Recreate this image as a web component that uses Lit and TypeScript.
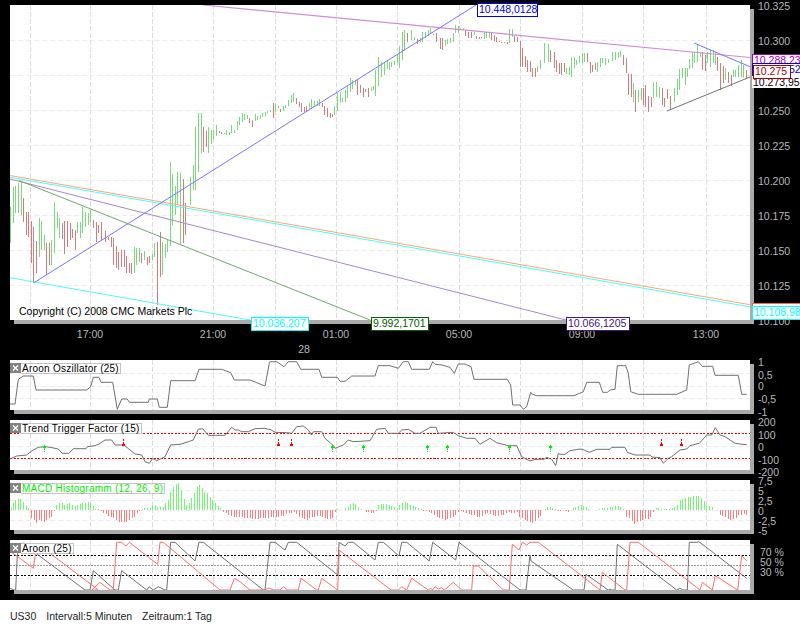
import { LitElement, html, svg, css } from 'lit'
import { customElement } from 'lit/decorators.js'

// all traced from the reference, coordinates are zoom crop pixels (3x) unless scale says otherwise
const line = (x0: number, y0: number, pts: number[][], scale = 3) =>
  pts.map(([x, y]) => `${(x0 + x / scale).toFixed(1)},${(y0 + y / scale).toFixed(1)}`).join(' ')

const barSegs: [number, number, number, string][] = [
  [0, 170, 3, 'g30:110-220 g41:50-160 g47:48-130 g54:40-130 g64:33-135 r70:85-155 r78:127-195 r85:127-200 r94:153-280 r101:172-338 r110:212-308 g118:145-262 g125:152-240 g132:195-240 r140:220-315 r148:220-285 g155:210-285 g163:97-250 g172:125-175 g179:145-205 r187:160-207 r194:152-252 r203:152-230 r211:160-210 r218:178-205 r226:180-240 g233:155-190 g241:155-205 g248:110-190 g256:125-170 g264:130-165 g272:120-155 r280:150-175 r288:155-215 r296:165-190 r303:155-210 r315:183-215 r325:200-210 r335:200-232 r341:205-285 r350:228-295 r356:245-300 r365:240-290 r373:240-290 r380:258-310 r388:280-310 r395:280-312 g403:232-310 g410:235-285 g417:235-275 r424:250-280 g433:243-270 r441:260-285 r449:258-280 g457:252-270 g464:220-260 r472:215-405 r480:187-320 g487:215-315 g495:222-265 g503:210-245'],
  [0, 0, 1, 'g170:162-246 g172.5:174-225 g175:186-215 g177.5:172-205 g180.5:173-245 r183:179-243 r185.5:203-235 g190:177-205 g193:165-190 g195.5:127-190 g198.5:113-172 g201:113-153 r203.5:127-152 r206:131-147 g208.5:127-153 g211:130-144 g213.5:130-139 g216.5:125-136 r219:131-133 r221:132-134 r224:133-134 g226.5:130-135 g229:132-135 g231.5:125-133 g234:130-133 g237:121-130 g239.5:117-125 g242.5:113-122 g244.5:114-120 g247:115-119 r249.5:118-123 r252.5:120-127 g255.5:114-121 g257.5:116-120 g260:115-119 g262.5:113-117 g265:112-116 g267.5:111-113'],
  [270, 0, 3, 'g0:330-337 r10:310-353 g17:313-335 g25:318-325 r32:327-335 g40:317-332 g47:315-325 g55:300-318 g63:285-310 g70:280-307 r79:293-312 r87:305-320 r95:310-335 r102:320-335 r110:318-335 g118:310-328 g125:297-327 g134:303-320 g141:302-318 g148:297-317 r156:310-320 r164:317-345 r172:323-352 r180:340-353 r188:342-352 g194:317-345 g202:280-333 g210:275-310 g218:295-307 g226:270-305 g233:258-295 g241:235-275 g248:240-268 g256:240-255 r263:237-285 r271:255-280 r280:263-290 r287:267-275 r296:265-290 g303:260-272 g311:257-270 g317:210-287 g326:172-258 g335:185-230 g343:190-225 g351:180-207 g357:185-210 g365:185-200 g373:182-195 g381:165-190 g389:138-205 g396:95-180 g404:90-150 r412:100-125 g424:90-120 g432:110-120 r442:117-132 g450:115-125 g457:95-125 g466:95-115 g474:90-108 g480:85-103 r490:102-105 r498:100-125 r510:113-148 r517:115-150 g526:120-137 g533:118-133 g541:115-128 g550:100-125 g557:75-98 g565:78-100 g572:83-90 g580:85-90 r587:92-108 r596:95-115 r604:97-115 g612:97-105 r620:107-118 r628:110-117 r635:110-115 g643:97-118 g650:97-115 g659:95-115 r665:97-120 r673:105-122 r680:110-127 r688:122-127 r695:125-130 r703:127-130 r712:127-132 g718:87-130 g726:87-110 r733:107-125 r741:110-125 r750:123-200 r757:145-200 r765:168-200 r772:180-215 r780:182-215 r788:205-230 r796:205-232 g803:198-215'],
  [530, 0, 3, 'g32:180-208 g42:130-190 g55:132-185 r62:150-185 r72:155-205 r78:180-215 r87:190-222 r94:190-225 r102:190-215 g110:205-222 g118:200-225 g125:170-232 g132:170-205 g140:180-195 g148:167-188 g156:160-188 g164:160-187 r172:160-185 r180:185-218 r187:195-215 r195:190-210 g203:185-215 g210:175-200 g218:175-190 g225:175-195 g235:178-190 g247:155-183 g256:155-180 g264:155-175 g271:153-172 r280:165-195 r288:175-220 r296:222-285 r303:222-290 g310:250-305 r317:270-337 g326:270-305 g333:265-300 r341:265-315 r347:255-320 r355:287-335 r363:290-320 g370:245-295 g379:245-290 g387:262-295 r396:265-315 r404:295-320 r412:268-297 r420:287-328 g433:265-305 g441:237-285 g449:208-270 g456:205-235 g465:205-255 g471:205-232 g479:177-207 g486:155-205 g494:155-190 g503:135-185 g510:155-170 r518:155-210 r526:165-212 g533:155-190 g540:150-200 g549:150-190 g556:155-195 r562:172-212 r572:190-270 r580:197-250 g587:205-240 r596:215-250 r603:225-258 g610:210-232 g617:210-232 g625:195-232 g635:180-230 g640:195-235 r650:210-235'],
]

const px = (x: number) => Math.floor(x) + 0.5

function barPaths() {
  const d: Record<string, string> = { g: '', r: '' }
  for (const [x0, y0, s, data] of barSegs) {
    for (const b of data.split(' ')) {
      const m = b.match(/([gr])([\d.]+):(\d+)-(\d+)/)!
      d[m[1]] += `M${px(x0 + +m[2] / s)} ${(y0 + +m[3] / s).toFixed(1)}V${(y0 + +m[4] / s).toFixed(1)}`
    }
  }
  return d
}

const macdSegs: [number, string][] = [
  [0, '33:95 40:85 47:75 55:72 62:72 70:80 78:92 85:100 95:128 102:135 110:145 118:135 125:138 133:140 140:135 148:130 155:125 163:108 170:90 178:85 186:83 193:90 201:87 209:85 217:90 225:93 232:90 240:87 248:83 256:85 264:82 272:85 280:92 287:102 295:103 303:107 310:115 318:118 326:122 333:125 341:130 349:135 357:140 365:140 372:140 380:140 388:135 396:130 403:125 411:113 419:107 426:102 434:100 442:98 450:100 458:90 466:90 473:95 481:95 489:95 497:85 505:75 512:50 520:35 528:27 536:25 544:45 552:72 560:90 568:85 575:70 583:55 591:35 599:30 606:40 614:50 622:55 630:65 638:75 646:85 654:92 662:100 670:110 678:115 686:120 694:122 702:125 710:125 718:125 726:127 734:128 742:130 750:130 758:132 766:133 774:132 782:130 790:130'],
  [265, '2:128 10:128 18:127 25:125 33:125 41:125 48:122 56:122 64:118 72:115 80:113 87:110 95:118 103:125 111:130 118:133 126:135 134:130 141:125 149:125 157:123 165:123 172:125 180:130 188:133 196:133 203:128 211:110 218:103 226:105 233:104 241:100 249:95 257:88 265:85 272:88 280:97 288:103 303:110 311:110 319:113 326:113 334:108 340:90 348:88 356:87 364:88 372:90 380:92 388:95 396:98 404:90 412:85 420:80 428:85 436:90 444:92 452:95 460:100 468:103 476:107 484:108 492:112 500:115 508:120 516:125 524:130 532:133 540:135 548:133 556:130 564:125 572:120 580:112 588:108 596:110 604:115 612:118 620:120 628:120 636:125 644:125 652:123 660:118 668:115 676:117 684:120 692:122 700:122 708:120 716:120 724:115 732:110 740:113 748:113 756:110 764:125 772:130 780:135 788:137 796:140'],
  [530, '8:143 16:138 24:130 31:122 45:103 52:97 60:96 68:98 76:103 85:107 92:107 100:105 108:108 115:112 122:105 130:100 137:97 145:93 153:90 160:92 168:97 176:103 184:105 192:105 200:104 208:102 216:100 224:99 232:99 240:97 248:95 256:93 264:93 272:95 280:103 290:125 298:130 306:137 314:147 322:140 330:137 338:135 346:133 354:133 362:125 370:112 378:100 386:100 394:103 402:102 410:103 418:102 426:100 434:97 442:90 450:75 458:72 466:70 474:66 482:65 490:64 498:63 506:64 514:68 522:78 530:92 538:92 546:95 554:105 570:120 578:122 586:125 594:132 602:135 610:133 618:128 626:120 634:120 642:117 650:119'],
]

function macdPaths() {
  let g = ''
  let r = ''
  for (const [x0, data] of macdSegs) {
    for (const b of data.split(' ')) {
      const [x, y] = b.split(':').map(Number)
      const top = (475 + y / 3).toFixed(1)
      if (y < 105) g += `M${px(x0 + x / 3)} ${top}V510`
      else if (y > 105) r += `M${px(x0 + x / 3)} 510V${top}`
    }
  }
  return { g, r }
}

const oscLine = [
  line(0, 350, [[30, 162], [45, 162], [55, 88], [70, 78], [100, 78], [108, 120], [260, 120], [272, 110], [280, 82], [297, 82], [303, 97], [338, 97], [352, 178], [365, 147], [382, 147], [388, 157], [445, 157], [448, 147], [472, 147], [478, 172], [502, 172], [512, 92], [585, 92], [597, 58], [665, 58], [692, 68], [703, 90], [750, 90], [795, 108], [808, 40]]),
  line(270, 270, [[0, 275], [20, 275], [42, 290], [55, 275], [80, 275], [92, 298], [147, 298], [155, 322], [202, 322], [210, 334], [225, 334], [245, 318], [315, 318], [325, 287], [360, 287], [385, 295], [400, 275], [415, 275], [425, 298], [478, 298], [488, 275], [495, 283], [515, 285], [540, 292], [553, 310], [565, 282], [585, 282], [603, 290], [612, 328], [712, 328], [722, 345], [728, 405], [750, 405], [760, 418], [770, 410], [782, 367]]),
  line(530, 270, [[5, 372], [20, 377], [132, 377], [160, 365], [170, 337], [208, 337], [218, 367], [232, 367], [240, 360], [255, 358], [262, 287], [287, 287], [295, 310], [302, 365], [325, 373], [440, 373], [470, 360], [478, 285], [505, 275], [517, 289], [548, 289], [555, 316], [625, 316], [635, 373], [650, 373]]),
].join(' ')

const ttfLine = [
  line(0, 350, [[30, 327], [50, 318], [80, 315], [95, 303], [115, 292], [135, 290], [150, 292], [175, 297], [187, 310], [207, 310], [220, 296], [258, 296], [262, 290], [285, 287], [297, 282], [315, 270], [335, 270], [345, 285], [372, 285], [390, 300], [405, 312], [425, 315], [435, 335], [448, 340], [458, 325], [470, 332], [495, 320], [512, 285], [540, 283], [565, 275], [580, 270], [595, 238], [608, 236], [625, 256], [675, 256], [695, 232], [705, 240], [715, 240], [725, 245], [745, 245], [765, 236], [795, 235], [805, 238]]),
  line(270, 270, [[0, 478], [15, 487], [50, 488], [65, 490], [80, 470], [100, 468], [115, 480], [125, 495], [130, 485], [155, 485], [165, 505], [188, 525], [195, 535], [220, 525], [235, 510], [250, 515], [300, 512], [320, 478], [345, 475], [355, 490], [385, 490], [395, 480], [415, 478], [435, 490], [450, 490], [480, 472], [498, 472], [505, 490], [550, 487], [565, 497], [590, 505], [615, 505], [630, 523], [660, 505], [680, 518], [715, 527], [740, 527], [755, 560], [780, 573]]),
  line(530, 415, [[15, 133], [42, 133], [50, 127], [65, 133], [77, 152], [85, 115], [90, 118], [105, 118], [120, 107], [150, 102], [160, 104], [178, 112], [200, 103], [240, 103], [245, 97], [285, 97], [292, 112], [315, 120], [360, 120], [365, 126], [390, 128], [400, 145], [415, 130], [425, 125], [450, 105], [470, 102], [480, 92], [508, 85], [530, 60], [545, 60], [556, 38], [570, 60], [585, 65], [615, 85], [630, 87], [650, 89]]),
].join(' ')

const aroonGray = [
  line(0, 475, [[30, 340], [42, 345], [47, 345], [52, 240], [62, 205], [75, 205], [108, 235], [255, 345], [270, 345], [280, 287], [345, 345], [355, 345], [365, 287], [440, 345], [447, 335], [460, 345], [475, 335], [495, 345], [500, 345], [512, 202], [525, 202], [585, 258], [597, 202], [610, 202], [790, 345]]),
  line(265, 475, [[0, 345], [15, 202], [30, 202], [60, 225], [70, 202], [95, 202], [218, 300], [222, 202], [240, 213], [250, 202], [265, 202], [330, 255], [340, 202], [355, 202], [402, 243], [410, 202], [425, 202], [493, 258], [503, 202], [572, 255], [582, 202], [765, 345], [783, 345], [795, 240]]),
  line(530, 475, [[3, 258], [130, 345], [162, 345], [168, 298], [235, 345], [240, 342], [245, 345], [255, 345], [262, 208], [440, 345], [450, 340], [458, 345], [472, 345], [478, 202], [500, 202], [507, 200], [650, 310]]),
].join(' ')

const aroonRed = [
  line(0, 475, [[30, 228], [100, 280], [108, 225], [125, 205], [150, 235], [295, 345], [275, 345], [300, 322], [330, 345], [340, 345], [350, 202], [365, 202], [378, 213], [388, 202], [473, 268], [480, 202], [490, 202], [660, 345], [690, 345], [703, 310], [720, 320], [750, 345], [790, 345]]),
  line(265, 475, [[0, 345], [8, 340], [15, 340], [25, 345], [45, 345], [55, 335], [68, 345], [100, 345], [108, 310], [155, 345], [160, 345], [170, 310], [218, 345], [223, 226], [378, 345], [400, 345], [410, 335], [425, 345], [440, 310], [490, 345], [497, 340], [503, 345], [510, 335], [520, 342], [530, 338], [538, 345], [565, 322], [590, 345], [620, 345], [625, 273], [640, 273], [715, 345], [733, 345], [742, 208], [762, 225], [772, 202], [785, 210], [795, 202]]),
  line(530, 475, [[25, 202], [210, 345], [217, 292], [285, 345], [290, 345], [300, 202], [325, 202], [510, 345], [517, 322], [547, 345], [556, 302], [623, 345], [635, 242], [650, 258]]),
].join(' ')

const vGrid = [30, 90, 152, 213, 275, 336, 397, 459, 520, 582, 643, 706]
const bars = barPaths()
const macd = macdPaths()

const grid = (top: number, bottom: number, rows: number[]) => svg`
  ${rows.map((y) => svg`<path class="hgrid" d="M10 ${y + 0.5}H750" />`)}
  ${vGrid.map((x) => svg`<path class="vgrid" d="M${x + 0.5} ${top}V${bottom}" />`)}
`

const greenMarks = [44, 332, 363, 427, 447, 509, 550]
const redMarks = [123, 278, 291, 661, 681]

const trendLines = [
  { cls: 'magenta', pts: '203,5 750,57.5' },
  { cls: 'orange', pts: '10,175.5 750,304.7' },
  { cls: 'cyan', pts: '10,177.2 750,306.9' },
  { cls: 'purple', pts: '10,179 566,320' },
  { cls: 'green', pts: '19,180.5 370,320' },
  { cls: 'cyan', pts: '10,277.7 250,320' },
  { cls: 'blue', pts: '34,282.7 476,5' },
  { cls: 'blue', pts: '694,43 750,66.7' },
  { cls: 'slate', pts: '667,111 750,77' },
]

const priceTags = [
  { x: 477, y: 3, w: 61, c: '#0000f0', t: '10.448,0128' },
  { x: 251, y: 317, w: 58, c: '#00ffff', t: '10.036,207' },
  { x: 371, y: 317, w: 58, c: '#006000', t: '9.992,1701' },
  { x: 566, y: 317, w: 64, c: '#401880', t: '10.066,1205' },
  { x: 752, y: 54, w: 60, c: '#a000b0', t: '10.288,23' },
  { x: 752, y: 63, w: 60, c: '#0000f0', t: '10.280,52' },
  { x: 752, y: 76, w: 60, c: '#000000', t: '10.273,95', plain: true },
  { x: 753, y: 65, w: 38, c: '#a80000', t: '10.275' },
  { x: 752, y: 303, w: 60, c: '#ff6a20', t: '' },
  { x: 752, y: 306, w: 60, c: '#00ffff', t: '10.108,98' },
]

const priceAxis: [string, number][] = [
  ['10.325', 6], ['10.300', 41], ['10.250', 111], ['10.225', 146], ['10.200', 181],
  ['10.175', 216], ['10.150', 251], ['10.125', 286], ['10.100', 321],
]
const timeAxis: [string, number][] = [['17:00', 90], ['21:00', 213], ['01:00', 336], ['05:00', 459], ['09:00', 582], ['13:00', 706]]

const panels = [
  { title: 'Aroon Oszillator (25)', top: 360, rows: [373, 386, 398], axis: [['1', 2], ['0,5', 15], ['0', 26], ['-0,5', 39], ['-1', 52]] },
  { title: 'Trend Trigger Factor (15)', top: 420, rows: [433, 446, 458], axis: [['200', 2], ['100', 15], ['0', 27], ['-100', 40], ['-200', 52]] },
  { title: 'MACD Histogramm (12, 26, 9)', top: 480, rows: [490, 500, 510, 520], cls: 'lime', axis: [['7,5', 1], ['5', 11], ['2,5', 21], ['0', 31], ['-2,5', 41], ['-5', 51]] },
  { title: 'Aroon (25)', top: 540, rows: [545, 578], axis: [['70 %', 12], ['50 %', 22], ['30 %', 32]], inset: true },
]

@customElement('app-root')
export class AppRoot extends LitElement {
  static styles = css`
    :host {
      display: block;
      width: 800px;
      height: 625px;
      overflow: hidden;
      background: #000;
      font-family: 'Liberation Sans', Arial, sans-serif;
      font-size: 10.5px;
      position: relative;
    }
    .charts {
      display: flex;
      flex-direction: column;
      gap: 10px;
      padding: 5px 0 10px;
      height: 600px;
      box-sizing: border-box;
    }
    .row {
      display: flex;
      padding-left: 10px;
    }
    .plot {
      width: 740px;
      height: 50px;
      background: #fff;
      box-shadow: 4px 4px 0 #aaa;
      position: relative;
      z-index: 1;
      flex: none;
    }
    .plot.main {
      height: 315px;
    }
    .plot svg {
      display: block;
      width: 740px;
      height: 100%;
    }
    .axis {
      position: relative;
      flex: 1;
    }
    .tick {
      position: absolute;
      left: 8px;
      color: #b8b8b8;
      transform: translateY(-50%);
      white-space: nowrap;
      line-height: 12px;
    }
    .tick.inset {
      left: 10px;
    }
    .times {
      position: relative;
      height: 30px;
    }
    .time {
      position: absolute;
      color: #b8b8b8;
      transform: translate(-50%, -50%);
      line-height: 12px;
    }
    .hgrid {
      stroke: #ececec;
      stroke-dasharray: 5 3;
      shape-rendering: crispEdges;
    }
    .vgrid {
      stroke: #dcdcdc;
      stroke-dasharray: 5 2;
      shape-rendering: crispEdges;
    }
    .bars {
      fill: none;
      stroke-width: 1;
      shape-rendering: crispEdges;
    }
    .bars.g { stroke: #7cd87c; }
    .bars.r { stroke: #d27c7c; }
    .bars.hg { stroke: #70f870; }
    .bars.hr { stroke: #ff7c7c; }
    polyline {
      fill: none;
      stroke-width: 1;
    }
    .magenta { stroke: #d48ad8; stroke-width: 1.2; }
    .orange { stroke: #f8a878; }
    .cyan { stroke: #50f8f8; }
    .purple { stroke: #a888c8; }
    .green { stroke: #70a870; }
    .blue { stroke: #7474ff; }
    .slate { stroke: #707070; }
    .ind { stroke: #707070; }
    .ind-red { stroke: #ff6c6c; }
    .red-dots {
      stroke: #f00000;
      stroke-dasharray: 2 1.5;
      shape-rendering: crispEdges;
    }
    .black-dots {
      stroke: #000;
      stroke-dasharray: 2 1.5;
      shape-rendering: crispEdges;
    }
    .mid {
      stroke: #999;
      stroke-dasharray: 2 1;
      shape-rendering: crispEdges;
    }
    .stem {
      fill: none;
      stroke-dasharray: 2 1;
      shape-rendering: crispEdges;
    }
    .cross {
      fill: none;
      stroke-width: 2;
      shape-rendering: crispEdges;
    }
    .up { stroke: #00ee00; }
    .down { stroke: #ff0000; }
    .tag {
      position: absolute;
      box-sizing: border-box;
      height: 14px;
      background: #fff;
      border: 1.5px solid;
      line-height: 11px;
      padding-left: 1px;
      white-space: nowrap;
      overflow: hidden;
    }
    .tag.plain {
      border: 0;
      line-height: 13px;
      height: 12px;
    }
    .copyright {
      position: absolute;
      left: 9px;
      bottom: 2px;
      color: #000;
      line-height: 13px;
    }
    .legend {
      position: absolute;
      left: 0;
      top: 3px;
      height: 10px;
      display: flex;
      align-items: stretch;
    }
    .close {
      width: 11px;
      background: #848484;
      flex: none;
    }
    .close svg {
      width: 11px;
      height: 10px;
    }
    .close path {
      stroke: #fff;
      stroke-width: 1.3;
    }
    .title {
      background: #fff;
      border: 1px solid #c4c4c4;
      border-left: 0;
      margin: -0.5px 0;
      padding: 0 1px;
      font-size: 10px;
      line-height: 10px;
      letter-spacing: 0.25px;
      color: #000;
      white-space: nowrap;
    }
    .title.lime {
      color: #00ee00;
    }
    footer {
      height: 25px;
      background: #fff;
      display: flex;
      align-items: center;
      gap: 10px;
      padding: 6px 0 0 10px;
      box-sizing: border-box;
      color: #222;
    }
  `

  private marks() {
    return svg`
      ${greenMarks.map((x) => svg`
        <path class="stem up" d="M${x + 0.5} 445V452" />
        <path class="cross up" d="M${x - 1} 447H${x + 2}" />
      `)}
      ${redMarks.map((x) => svg`
        <path class="stem down" d="M${x + 0.5} 439V446" />
        <path class="cross down" d="M${x - 1} 445H${x + 2}" />
      `)}
    `
  }

  private panelBody(i: number) {
    const p = panels[i]
    const bottom = p.top + 50
    if (i === 0) {
      return svg`${grid(p.top, bottom, p.rows)}<polyline class="ind" points=${oscLine} />`
    }
    if (i === 1) {
      return svg`${grid(p.top, bottom, p.rows)}
        <path class="red-dots" d="M10 433.5H750M10 458.5H750" />
        <polyline class="ind" points=${ttfLine} />
        ${this.marks()}`
    }
    if (i === 2) {
      return svg`${grid(p.top, bottom, p.rows)}
        <path class="bars hg" d=${macd.g} />
        <path class="bars hr" d=${macd.r} />`
    }
    return svg`${grid(p.top, bottom, p.rows)}
      <path class="black-dots" d="M10 555.5H750M10 575.5H750" />
      <path class="mid" d="M10 565.5H750" />
      <polyline class="ind" points=${aroonGray} />
      <polyline class="ind-red" points=${aroonRed} />`
  }

  render() {
    return html`
      <div class="charts">
        <div>
          <div class="row">
            <div class="plot main">
              <svg viewBox="10 5 740 315">
                ${grid(5, 320, [40, 75, 110, 145, 180, 215, 250, 285])}
                <path class="bars g" d=${bars.g} />
                <path class="bars r" d=${bars.r} />
                ${trendLines.map((l) => svg`<polyline class=${l.cls} points=${l.pts} />`)}
              </svg>
              <div class="copyright">Copyright (C) 2008 CMC Markets Plc</div>
              ${priceTags.map((t) => html`
                <div
                  class="tag ${t.plain ? 'plain' : ''}"
                  style="left:${t.x - 10}px;top:${t.y - 5}px;width:${t.w}px;color:${t.c};border-color:${t.c}"
                >${t.t}</div>
              `)}
            </div>
            <div class="axis">
              ${priceAxis.map(([t, y]) => html`<div class="tick" style="top:${y - 5}px">${t}</div>`)}
            </div>
          </div>
          <div class="times">
            ${timeAxis.map(([t, x]) => html`<div class="time" style="left:${x}px;top:14px">${t}</div>`)}
            <div class="time" style="left:304px;top:29px">28</div>
          </div>
        </div>
        ${panels.map((p, i) => html`
          <div class="row">
            <div class="plot">
              <svg viewBox="10 ${p.top} 740 50">${this.panelBody(i)}</svg>
              <div class="legend">
                <div class="close">
                  <svg viewBox="0 0 11 10"><path d="M3 2.5L8 7.5M8 2.5L3 7.5" /></svg>
                </div>
                <div class="title ${p.cls ?? ''}">${p.title}</div>
              </div>
            </div>
            <div class="axis">
              ${p.axis.map(([t, y]) => html`<div class="tick ${p.inset ? 'inset' : ''}" style="top:${y}px">${t}</div>`)}
            </div>
          </div>
        `)}
      </div>
      <footer>
        <span>US30</span>
        <span>Intervall:5 Minuten</span>
        <span>Zeitraum:1 Tag</span>
      </footer>
    `
  }
}

declare global {
  interface HTMLElementTagNameMap {
    'app-root': AppRoot
  }
}
